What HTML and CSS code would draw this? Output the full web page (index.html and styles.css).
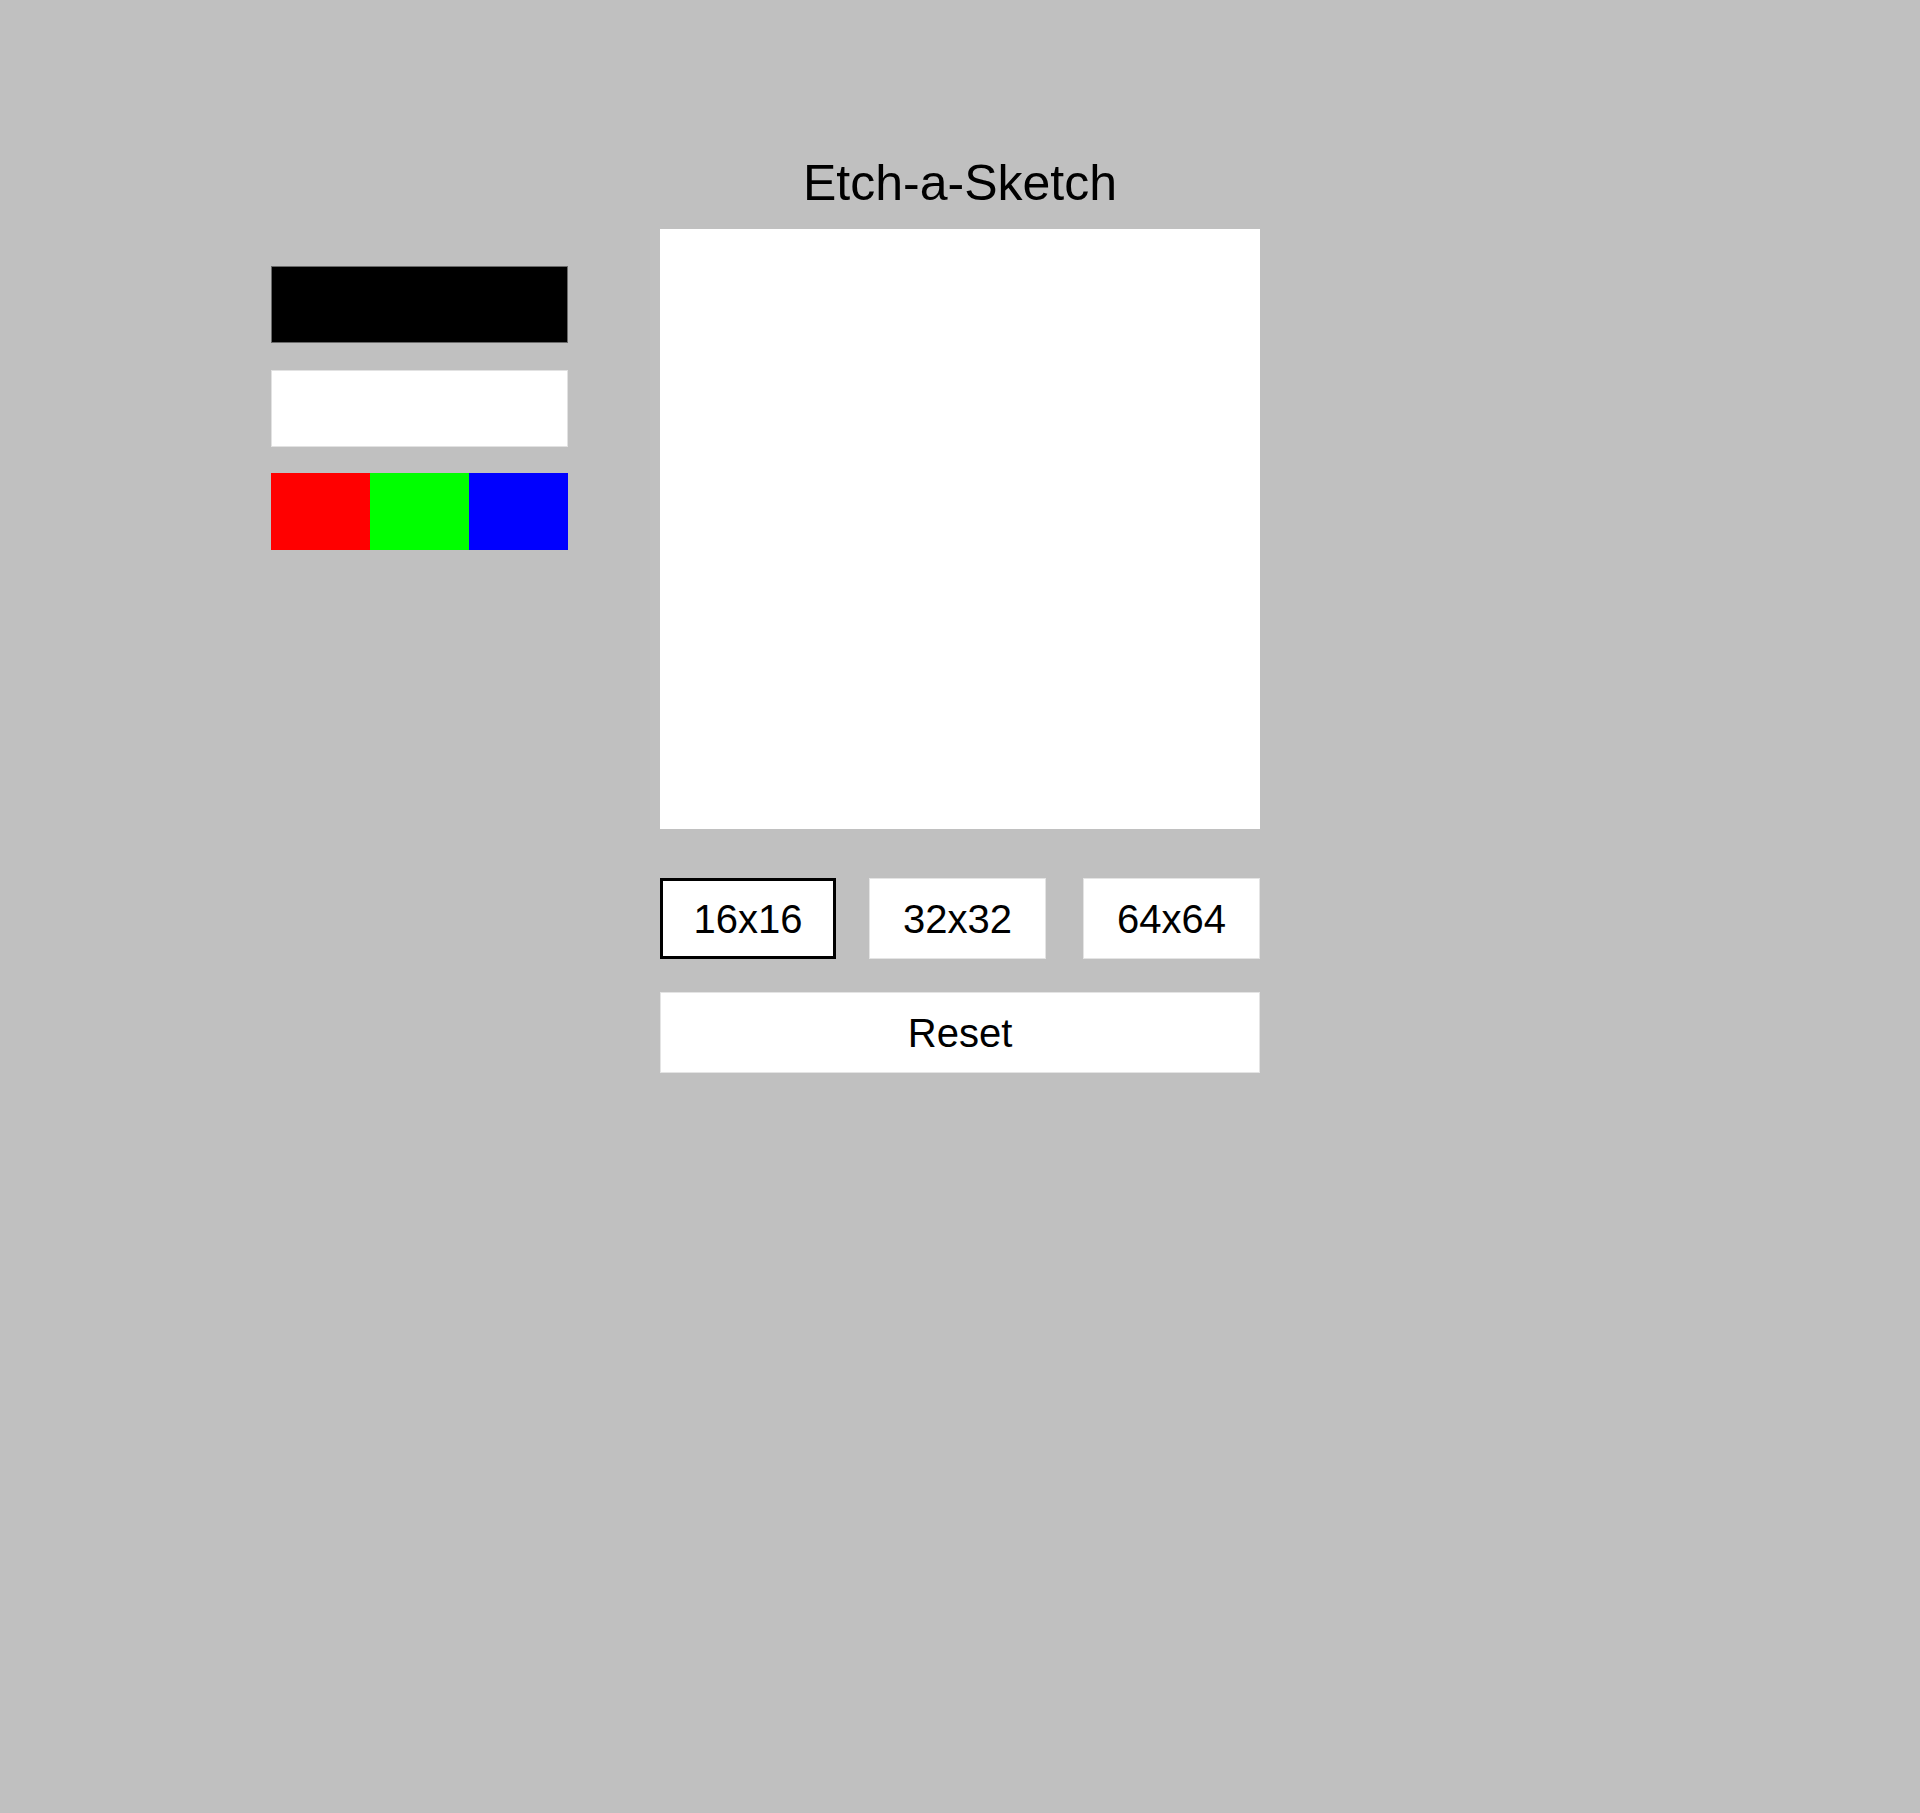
FILE: index.html
```html
<!DOCTYPE html>
<html lang="en">
<head>
<meta charset="utf-8">
<title>Etch-a-Sketch</title>
<link rel="stylesheet" href="styles.css">
</head>
<body>
<div class="page">
  <aside class="palette">
    <button class="swatch swatch-black" aria-label="Black"></button>
    <button class="swatch swatch-white" aria-label="Eraser"></button>
    <div class="swatch swatch-rgb">
      <button class="rgb rgb-red" aria-label="Red"></button>
      <button class="rgb rgb-green" aria-label="Green"></button>
      <button class="rgb rgb-blue" aria-label="Blue"></button>
    </div>
  </aside>
  <main class="board">
    <h1 class="title">Etch-a-Sketch</h1>
    <div class="canvas"></div>
    <div class="sizes">
      <button class="btn size size-active">16x16</button>
      <button class="btn size size-mid">32x32</button>
      <button class="btn size size-last">64x64</button>
    </div>
    <button class="btn reset">Reset</button>
  </main>
  <div class="spacer"></div>
</div>
</body>
</html>
```

FILE: styles.css
```css
html, body {
  margin: 0;
  padding: 0;
  background: #c0c0c0;
}

body {
  font-family: "Liberation Sans", Arial, sans-serif;
  color: #000;
}

.page {
  display: grid;
  grid-template-columns: 1fr 600px 1fr;
  padding-top: 155px;
  min-height: 1813px;
  box-sizing: border-box;
}

.palette {
  justify-self: end;
  align-self: start;
  margin-top: 111px;
  margin-right: 92px;
  width: 297px;
  display: flex;
  flex-direction: column;
  gap: 26.5px;
}

.swatch {
  display: block;
  width: 297px;
  height: 77px;
  margin: 0;
  padding: 0;
  box-sizing: border-box;
  border: 1px solid #777;
}

.swatch-black {
  background: #000;
  border-color: #6a6a6a;
}

.swatch-white {
  background: #fff;
  border-color: #e2e2e2;
}

.swatch-rgb {
  display: flex;
  border: none;
}

.rgb {
  flex: 1;
  margin: 0;
  padding: 0;
  border: none;
  height: 77px;
}

.rgb-red { background: #ff0000; }
.rgb-green { background: #00ff00; }
.rgb-blue { background: #0000ff; }

.board {
  display: flex;
  flex-direction: column;
}

.title {
  margin: 0;
  font-size: 50px;
  line-height: 56px;
  font-weight: normal;
  text-align: center;
}

.canvas {
  margin-top: 18px;
  width: 600px;
  height: 600px;
  background: #fff;
}

.sizes {
  margin-top: 49px;
  display: flex;
}

.btn {
  font-family: "Liberation Sans", Arial, sans-serif;
  font-size: 40px;
  color: #000;
  background: #fff;
  border: 1px solid #e4e4e4;
  height: 81px;
  box-sizing: border-box;
  margin: 0;
  padding: 2px 0 0;
  display: flex;
  align-items: center;
  justify-content: center;
}

.size {
  width: 177px;
}

.size-active {
  width: 176px;
  border: 3px solid #000;
  margin-right: 33px;
}

.size-last {
  margin-left: auto;
}

.reset {
  margin-top: 33px;
  width: 600px;
}
```
